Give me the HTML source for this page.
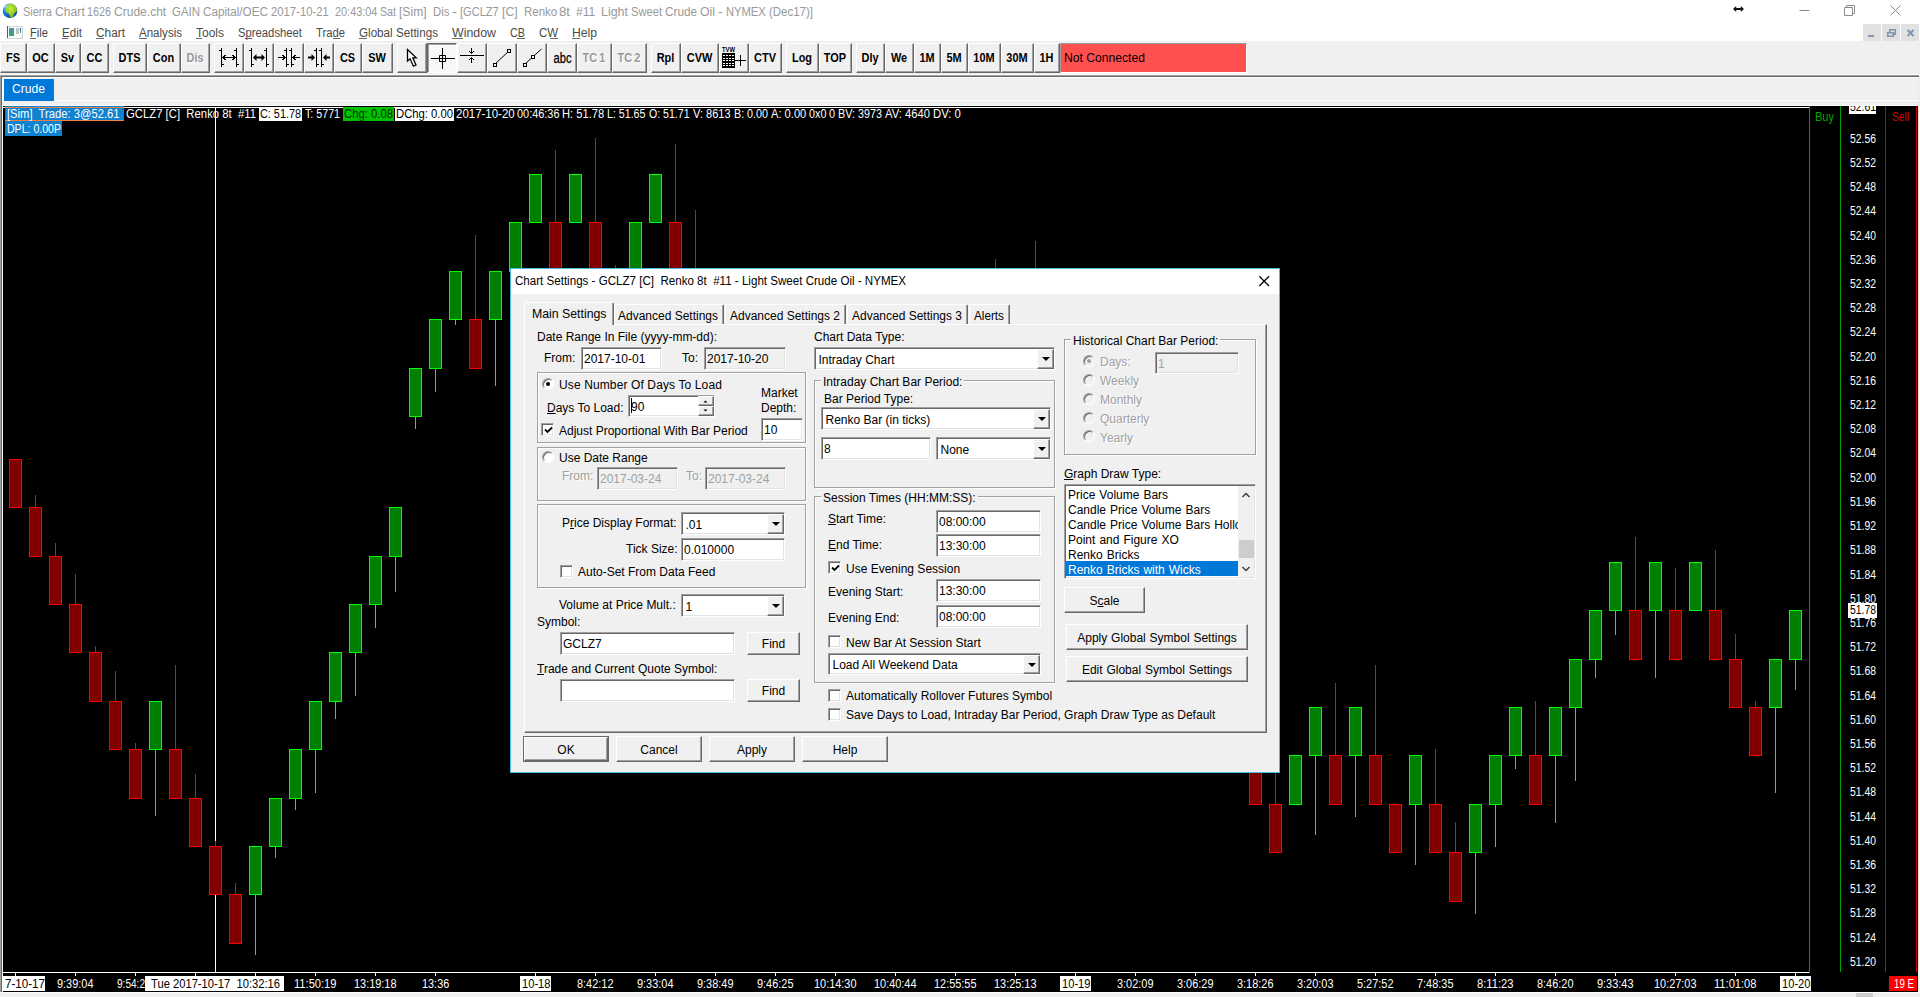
<!DOCTYPE html>
<html><head><meta charset="utf-8"><title>Sierra Chart</title>
<style>
html,body{margin:0;padding:0;}
body{width:1920px;height:997px;position:relative;overflow:hidden;background:#fff;font-family:"Liberation Sans",sans-serif;font-size:12px;color:#000;}
div,span{box-sizing:border-box;}
.a{position:absolute;}
/* toolbar buttons */
.tb{position:absolute;top:43px;height:30px;background:#f0f0f0;border:1px solid;border-color:#fff #696969 #696969 #fff;box-shadow:inset -1px -1px 0 #a0a0a0;}
.tb b{position:absolute;left:-1px;right:0;top:6px;text-align:center;font-size:13.5px;line-height:16px;font-weight:700;color:#000;transform:scaleX(.81);white-space:nowrap;}
.tb.dis b{color:#989898;text-shadow:1px 1px 0 #fff;word-spacing:-1px;}
.tb svg{position:absolute;left:0;top:0;}
/* candles */
.cr,.cg{position:absolute;width:13px;height:49px;border:1px solid;}
.cr{background:#800000;border-color:#f00;}
.cg{background:#008000;border-color:#0f0;}
.wr,.wg{position:absolute;width:1px;}
.wr{background:#f00;}
.wg{background:#0f0;}
/* dialog */
.btn{position:absolute;word-spacing:.5px;background:#f0f0f0;border:1px solid;border-color:#fff #696969 #696969 #fff;box-shadow:inset -1px -1px 0 #a0a0a0;text-align:center;font-size:12px;white-space:nowrap;}
.ed{position:absolute;background:#fff;border:1px solid;border-color:#a0a0a0 #fff #fff #a0a0a0;box-shadow:inset 1px 1px 0 #696969,inset -1px -1px 0 #e3e3e3;font-size:12px;white-space:nowrap;overflow:hidden;}
.ed.ro{background:#f0f0f0;}
.ed span{position:absolute;left:2px;top:3px;line-height:16px;}
.dd{position:absolute;right:0;top:1px;width:17px;bottom:0;background:#f0f0f0;border:1px solid;border-color:#fff #696969 #696969 #fff;box-shadow:inset -1px -1px 0 #a0a0a0;}
.dd i{position:absolute;left:4px;top:7px;width:0;height:0;border-left:4px solid transparent;border-right:4px solid transparent;border-top:4px solid #000;}
.gb{position:absolute;border:1px solid #a0a0a0;box-shadow:1px 1px 0 #fff,inset 1px 1px 0 #fff;}
.lb{position:absolute;font-size:12px;line-height:15px;white-space:nowrap;}
.lb.bg{background:#f0f0f0;padding:0 2px;}
.lb.dis{color:#a0a0a0;text-shadow:1px 1px 0 #fff;}
.cb{position:absolute;width:13px;height:13px;background:#fff;border:1px solid;border-color:#a0a0a0 #fff #fff #a0a0a0;box-shadow:inset 1px 1px 0 #696969,inset -1px -1px 0 #e3e3e3;}
.cb svg{position:absolute;left:2px;top:2px;}
.rd{position:absolute;width:12px;height:12px;border-radius:50%;background:#fff;border:1px solid;border-color:#a0a0a0 #fff #fff #a0a0a0;box-shadow:inset 1px 1px 0 #696969;transform:rotate(0deg);}
.rd.dis{background:#f0f0f0;}
.rd i{position:absolute;left:3px;top:3px;width:4px;height:4px;border-radius:50%;background:#000;}
.rd.dis i{background:#a0a0a0;}
u{text-decoration:underline;}

</style></head><body>
<div class="a" style="left:0;top:0;width:1920px;height:41px;background:#fff"></div><svg class="a" style="left:2px;top:3px" width="16" height="16" viewBox="0 0 16 16">
<defs><radialGradient id="gl" cx="30%" cy="28%" r="80%"><stop offset="0" stop-color="#7fd8ff"/><stop offset=".45" stop-color="#1f7fe0"/><stop offset="1" stop-color="#0a3a9a"/></radialGradient>
<radialGradient id="gg" cx="45%" cy="35%" r="75%"><stop offset="0" stop-color="#c6f03a"/><stop offset=".6" stop-color="#8fc81e"/><stop offset="1" stop-color="#4f9a1a"/></radialGradient>
<clipPath id="gc"><circle cx="8" cy="7.800" r="7.200"/></clipPath></defs>
<circle cx="8" cy="7.800" r="7.300" fill="url(#gl)"/>
<g clip-path="url(#gc)"><path d="M4.800 2.200C6.500 .800 10 .200 12.500 1.800c1.800 1.500 2.800 3.500 2.600 5.600-.500 1.300-1.700 1.600-2.600 2.600-.900 1.100-.600 2.800-1.400 4-.700 1-1.900 1.300-2.500.600C7.700 13.500 7.800 11.800 6.900 10.800 6 9.900 4.300 9.900 3.600 8.500 3 7.200 3.300 5.500 4 4.300z" fill="url(#gg)"/>
<path d="M3.200 3.500c1-.900 2.300-1.300 3.300-.800-.300.900-1.300 1.300-2 2-.600.500-1.300.700-1.800.300-.100-.500.100-1.100.500-1.500z" fill="#9adcf5" opacity=".75"/></g>
</svg><span style="position:absolute;left:22.9px;top:4.5px;height:15px;line-height:15px;font-size:12px;font-weight:400;color:#999;white-space:pre;transform-origin:0 50%;transform:scaleX(0.9027);">Sierra</span><span style="position:absolute;left:54.8px;top:4.5px;height:15px;line-height:15px;font-size:12px;font-weight:400;color:#999;white-space:pre;transform-origin:0 50%;transform:scaleX(1.0155);">Chart</span><span style="position:absolute;left:87.3px;top:4.5px;height:15px;line-height:15px;font-size:12px;font-weight:400;color:#999;white-space:pre;transform-origin:0 50%;transform:scaleX(0.8988);">1626</span><span style="position:absolute;left:113.9px;top:4.5px;height:15px;line-height:15px;font-size:12px;font-weight:400;color:#999;white-space:pre;transform-origin:0 50%;transform:scaleX(1.0032);">Crude.cht</span><span style="position:absolute;left:172.3px;top:4.5px;height:15px;line-height:15px;font-size:12px;font-weight:400;color:#999;white-space:pre;transform-origin:0 50%;transform:scaleX(0.9542);">GAIN</span><span style="position:absolute;left:202.9px;top:4.5px;height:15px;line-height:15px;font-size:12px;font-weight:400;color:#999;white-space:pre;transform-origin:0 50%;transform:scaleX(0.9730);">Capital/OEC</span><span style="position:absolute;left:270.8px;top:4.5px;height:15px;line-height:15px;font-size:12px;font-weight:400;color:#999;white-space:pre;transform-origin:0 50%;transform:scaleX(0.9415);">2017-10-21</span><span style="position:absolute;left:334.7px;top:4.5px;height:15px;line-height:15px;font-size:12px;font-weight:400;color:#999;white-space:pre;transform-origin:0 50%;transform:scaleX(0.9076);">20:43:04</span><span style="position:absolute;left:380.1px;top:4.5px;height:15px;line-height:15px;font-size:12px;font-weight:400;color:#999;white-space:pre;transform-origin:0 50%;transform:scaleX(0.8881);">Sat</span><span style="position:absolute;left:399.1px;top:4.5px;height:15px;line-height:15px;font-size:12px;font-weight:400;color:#999;white-space:pre;transform-origin:0 50%;transform:scaleX(1.0094);">[Sim]</span><span style="position:absolute;left:432.8px;top:4.5px;height:15px;line-height:15px;font-size:12px;font-weight:400;color:#999;white-space:pre;transform-origin:0 50%;transform:scaleX(0.9456);">Dis</span><span style="position:absolute;left:451.8px;top:4.5px;height:15px;line-height:15px;font-size:12px;font-weight:400;color:#999;white-space:pre;transform-origin:0 50%;transform:scaleX(1.2000);">-</span><span style="position:absolute;left:460.0px;top:4.5px;height:15px;line-height:15px;font-size:12px;font-weight:400;color:#999;white-space:pre;transform-origin:0 50%;transform:scaleX(0.9211);">[GCLZ7</span><span style="position:absolute;left:502.0px;top:4.5px;height:15px;line-height:15px;font-size:12px;font-weight:400;color:#999;white-space:pre;transform-origin:0 50%;transform:scaleX(1.0232);">[C]</span><span style="position:absolute;left:524.0px;top:4.5px;height:15px;line-height:15px;font-size:12px;font-weight:400;color:#999;white-space:pre;transform-origin:0 50%;transform:scaleX(0.9542);">Renko</span><span style="position:absolute;left:559.4px;top:4.5px;height:15px;line-height:15px;font-size:12px;font-weight:400;color:#999;white-space:pre;transform-origin:0 50%;transform:scaleX(1.0983);">8t</span><span style="position:absolute;left:575.6px;top:4.5px;height:15px;line-height:15px;font-size:12px;font-weight:400;color:#999;white-space:pre;transform-origin:0 50%;transform:scaleX(1.0031);">#11</span><span style="position:absolute;left:601.2px;top:4.5px;height:15px;line-height:15px;font-size:12px;font-weight:400;color:#999;white-space:pre;transform-origin:0 50%;transform:scaleX(1.0334);">Light</span><span style="position:absolute;left:631.1px;top:4.5px;height:15px;line-height:15px;font-size:12px;font-weight:400;color:#999;white-space:pre;transform-origin:0 50%;transform:scaleX(0.9353);">Sweet</span><span style="position:absolute;left:665.2px;top:4.5px;height:15px;line-height:15px;font-size:12px;font-weight:400;color:#999;white-space:pre;transform-origin:0 50%;transform:scaleX(0.9820);">Crude</span><span style="position:absolute;left:700.0px;top:4.5px;height:15px;line-height:15px;font-size:12px;font-weight:400;color:#999;white-space:pre;transform-origin:0 50%;transform:scaleX(1.0224);">Oil</span><span style="position:absolute;left:717.9px;top:4.5px;height:15px;line-height:15px;font-size:12px;font-weight:400;color:#999;white-space:pre;transform-origin:0 50%;transform:scaleX(1.1750);">-</span><span style="position:absolute;left:726.1px;top:4.5px;height:15px;line-height:15px;font-size:12px;font-weight:400;color:#999;white-space:pre;transform-origin:0 50%;transform:scaleX(0.9324);">NYMEX</span><span style="position:absolute;left:769.0px;top:4.5px;height:15px;line-height:15px;font-size:12px;font-weight:400;color:#999;white-space:pre;transform-origin:0 50%;transform:scaleX(0.9562);">(Dec17)]</span><svg class="a" style="left:1725px;top:0" width="195" height="23" viewBox="0 0 195 23" fill="none" stroke="#8a8a8a" stroke-width="1">
<path d="M74.500 10.500h10"/>
<path d="M119.500 7.500h8v8h-8zM121.500 7.500v-2h8v8h-2"/>
<path d="M165.500 5.500l10 10M175.500 5.500l-10 10"/>
<g stroke="none" fill="#111"><path d="M8 9l3.200-3v2h4.600v-2L19 9l-3.200 3v-2h-4.600v2z"/></g>
</svg><svg class="a" style="left:7px;top:26px" width="16" height="13" viewBox="0 0 16 13">
<rect x=".5" y=".5" width="15" height="12" fill="#fafafa" stroke="#d0d4da"/><rect x="0" y="0" width="1" height="12" fill="#5a5a60"/>
<defs><linearGradient id="mg" x1="0" y1="0" x2="0" y2="1"><stop offset="0" stop-color="#6a7ec0"/><stop offset=".3" stop-color="#3f9aa0"/><stop offset="1" stop-color="#3aa858"/></linearGradient></defs>
<rect x="2" y="2" width="5" height="8" fill="url(#mg)"/><rect x="9" y="2" width="3" height="6" fill="#c4c4c4"/><rect x="13" y="2" width="1" height="3" fill="#2a5fb0"/><rect x="13" y="5" width="1" height="2" fill="#3aa858"/>
</svg><span style="position:absolute;left:30px;top:25.8px;height:15px;line-height:15px;font-size:12px;font-weight:400;color:#4a4a4a;white-space:pre;transform-origin:0 50%;transform:scaleX(0.9305);">File</span><span style="position:absolute;left:62px;top:25.8px;height:15px;line-height:15px;font-size:12px;font-weight:400;color:#4a4a4a;white-space:pre;transform-origin:0 50%;transform:scaleX(0.9668);">Edit</span><span style="position:absolute;left:96px;top:25.8px;height:15px;line-height:15px;font-size:12px;font-weight:400;color:#4a4a4a;white-space:pre;transform-origin:0 50%;transform:scaleX(0.9883);">Chart</span><span style="position:absolute;left:139px;top:25.8px;height:15px;line-height:15px;font-size:12px;font-weight:400;color:#4a4a4a;white-space:pre;transform-origin:0 50%;transform:scaleX(0.9622);">Analysis</span><span style="position:absolute;left:196px;top:25.8px;height:15px;line-height:15px;font-size:12px;font-weight:400;color:#4a4a4a;white-space:pre;transform-origin:0 50%;transform:scaleX(0.9994);">Tools</span><span style="position:absolute;left:238px;top:25.8px;height:15px;line-height:15px;font-size:12px;font-weight:400;color:#4a4a4a;white-space:pre;transform-origin:0 50%;transform:scaleX(0.9403);">Spreadsheet</span><span style="position:absolute;left:316px;top:25.8px;height:15px;line-height:15px;font-size:12px;font-weight:400;color:#4a4a4a;white-space:pre;transform-origin:0 50%;transform:scaleX(0.9383);">Trade</span><span style="position:absolute;left:359px;top:25.8px;height:15px;line-height:15px;font-size:12px;font-weight:400;color:#4a4a4a;white-space:pre;transform-origin:0 50%;transform:scaleX(0.9706);">Global Settings</span><span style="position:absolute;left:452px;top:25.8px;height:15px;line-height:15px;font-size:12px;font-weight:400;color:#4a4a4a;white-space:pre;transform-origin:0 50%;transform:scaleX(1.0307);">Window</span><span style="position:absolute;left:510px;top:25.8px;height:15px;line-height:15px;font-size:12px;font-weight:400;color:#4a4a4a;white-space:pre;transform-origin:0 50%;transform:scaleX(0.8997);">CB</span><span style="position:absolute;left:539px;top:25.8px;height:15px;line-height:15px;font-size:12px;font-weight:400;color:#4a4a4a;white-space:pre;transform-origin:0 50%;transform:scaleX(0.9500);">CW</span><span style="position:absolute;left:572px;top:25.8px;height:15px;line-height:15px;font-size:12px;font-weight:400;color:#4a4a4a;white-space:pre;transform-origin:0 50%;transform:scaleX(1.0127);">Help</span><div class="a" style="left:30px;top:38px;width:6px;height:1px;background:#6a6a6a"></div><div class="a" style="left:62px;top:38px;width:6px;height:1px;background:#6a6a6a"></div><div class="a" style="left:96px;top:38px;width:8px;height:1px;background:#6a6a6a"></div><div class="a" style="left:139px;top:38px;width:8px;height:1px;background:#6a6a6a"></div><div class="a" style="left:196px;top:38px;width:6px;height:1px;background:#6a6a6a"></div><div class="a" style="left:244.5px;top:38px;width:7px;height:1px;background:#6a6a6a"></div><div class="a" style="left:333px;top:38px;width:7px;height:1px;background:#6a6a6a"></div><div class="a" style="left:359px;top:38px;width:8px;height:1px;background:#6a6a6a"></div><div class="a" style="left:452px;top:38px;width:11px;height:1px;background:#6a6a6a"></div><div class="a" style="left:517px;top:38px;width:8px;height:1px;background:#6a6a6a"></div><div class="a" style="left:550px;top:38px;width:8px;height:1px;background:#6a6a6a"></div><div class="a" style="left:572px;top:38px;width:8px;height:1px;background:#6a6a6a"></div><div class="a" style="left:1863px;top:24px;width:18px;height:18px;background:#e1e1e1"></div><div class="a" style="left:1882px;top:24px;width:18px;height:18px;background:#e1e1e1"></div><div class="a" style="left:1901px;top:24px;width:18px;height:18px;background:#e1e1e1"></div><svg class="a" style="left:1863px;top:24px" width="56" height="18" viewBox="0 0 56 18">
<rect x="5" y="11" width="6" height="2" fill="#7f94ad"/>
<g fill="none" stroke="#7f94ad" stroke-width="1.500"><path d="M26.750 8V5.750h5.500v4.500H30"/><rect x="24.750" y="8.750" width="5.500" height="3.500"/></g>
<path d="M44.500 6l6 6M50.500 6l-6 6" stroke="#7f94ad" stroke-width="2" fill="none"/>
</svg><div class="a" style="left:0;top:41px;width:1920px;height:65px;background:#f0f0f0"></div><div class="a" style="left:0;top:74px;width:1920px;height:1px;background:#fbfbfb"></div><div class="a" style="left:0;top:75px;width:1919px;height:1px;background:#a0a0a0"></div><div class="a" style="left:0;top:76px;width:1919px;height:1px;background:#696969"></div><div class="a" style="left:0;top:76px;width:1px;height:921px;background:#a0a0a0"></div><div class="a" style="left:1px;top:76px;width:1px;height:916px;background:#696969"></div><div class="a" style="left:2px;top:77px;width:1916px;height:1px;background:#fff"></div><div class="a" style="left:2px;top:77px;width:2px;height:25px;background:#fff"></div><div class="a" style="left:1918px;top:77px;width:1px;height:915px;background:#e8e8e8"></div><div class="a" style="left:54px;top:100px;width:1864px;height:1px;background:#fff"></div><div class="a" style="left:2px;top:105px;width:1916px;height:1px;background:#fcfcfc"></div><div class="a" style="left:4px;top:79px;width:49px;height:22px;background:#0078d7"></div><div class="a" style="left:53px;top:79px;width:1px;height:22px;background:#696969"></div><span style="position:absolute;left:12px;top:81.0px;height:16px;line-height:16px;font-size:13px;font-weight:400;color:#fff;white-space:pre;transform-origin:0 50%;transform:scaleX(0.9316);">Crude</span><div class="tb" style="left:0px;width:27px"><b>FS</b></div><div class="tb" style="left:27px;width:28px"><b>OC</b></div><div class="tb" style="left:55px;width:26px"><b>Sv</b></div><div class="tb" style="left:81px;width:28px"><b>CC</b></div><div class="tb" style="left:113px;width:34px"><b>DTS</b></div><div class="tb" style="left:147px;width:34px"><b>Con</b></div><div class="tb dis" style="left:181px;width:29px"><b>Dis</b></div><div class="tb" style="left:214px;width:30px"><svg width="30" height="30" viewBox="0 0 30 30" style="left:-1px;top:-1px"><g shape-rendering="crispEdges" stroke="#000" fill="none" stroke-width="1"><path d="M7.500 5v19M22.500 5v19M5 7.500h2M20 7.500h2M8 21.500h2M23 21.500h2M9 14.500h12M11.500 12l-2.500 2.500 2.500 2.500M18.500 12l2.500 2.500-2.500 2.500"/></g></svg></div><div class="tb" style="left:244px;width:30px"><svg width="30" height="30" viewBox="0 0 30 30" style="left:-1px;top:-1px"><g stroke="#000" fill="none" stroke-width="1"><path d="M7.500 5v19M22.500 5v19M5 7.500h2M20 7.500h2M8 21.500h2M23 21.500h2"/><path d="M11 14.500h8" stroke-width="2"/></g><path d="M9 14.500l3.500-3.500v7zM21 14.500l-3.500-3.500v7z" fill="#000"/></svg></div><div class="tb" style="left:274px;width:30px"><svg width="30" height="30" viewBox="0 0 30 30" style="left:-1px;top:-1px"><g shape-rendering="crispEdges" stroke="#000" fill="none" stroke-width="1"><path d="M12.500 5v19M17.500 5v19M10 7.500h2M15 7.500h2M13 21.500h2M18 21.500h2M4 14.500h7M8.500 12l2.500 2.500-2.500 2.500M19 14.500h7M21.500 12l-2.500 2.500 2.500 2.500"/></g></svg></div><div class="tb" style="left:304px;width:30px"><svg width="30" height="30" viewBox="0 0 30 30" style="left:-1px;top:-1px"><g stroke="#000" fill="none" stroke-width="1"><path d="M12.500 5v19M17.500 5v19M10 7.500h2M15 7.500h2M13 21.500h2M18 21.500h2"/><path d="M4 14.500h4M22 14.500h4" stroke-width="2"/></g><path d="M11 14.500l-3.500-3.500v7zM19 14.500l3.500-3.500v7z" fill="#000"/></svg></div><div class="tb" style="left:334px;width:28px"><b>CS</b></div><div class="tb" style="left:362px;width:31px"><b>SW</b></div><div class="tb" style="left:397px;width:30px"><svg width="30" height="30" viewBox="0 0 30 30" style="left:-1px;top:-1px"><path d="M10.500 6.500V18l2.600-2.200 3.300 7.400 2.600-1.200-3.200-7.200h3.400z" fill="#fff" stroke="#000" stroke-width="1.300"/></svg></div><div class="tb" style="left:427px;width:30px;border-color:#696969 #fff #fff #696969;box-shadow:inset 1px 1px 0 #a0a0a0;background:#f8f8f8"><svg width="30" height="30" viewBox="0 0 30 30" style="left:-1px;top:-1px"><g stroke="#000" fill="none" stroke-width="1"><path d="M4 15.500h24M15.500 5v21M12.500 12.500h6v6h-6z"/></g></svg></div><div class="tb" style="left:457px;width:30px"><svg width="30" height="30" viewBox="0 0 30 30" style="left:-1px;top:-1px"><g stroke="#000" fill="none" stroke-width="1"><path d="M3 12.500h24M14.500 5v5M12 8l2.500 2.500L17 8M14.500 20v-5M12 17l2.500-2.500L17 17"/></g></svg></div><div class="tb" style="left:487px;width:30px"><svg width="30" height="30" viewBox="0 0 30 30" style="left:-1px;top:-1px"><g stroke="#000" fill="#f0f0f0" stroke-width="1"><path d="M8 21L22 8"/><rect x="6.500" y="20.500" width="3" height="3"/><rect x="20.500" y="6.500" width="3" height="3"/></g></svg></div><div class="tb" style="left:517px;width:30px"><svg width="30" height="30" viewBox="0 0 30 30" style="left:-1px;top:-1px"><g stroke="#000" fill="#f0f0f0" stroke-width="1"><path d="M8 21L24.500 6"/><rect x="6.500" y="20.500" width="3" height="3"/><rect x="14.500" y="12.500" width="3" height="3"/></g></svg></div><div class="tb" style="left:547px;width:30px"><svg width="30" height="30" viewBox="0 0 30 30" style="left:-1px;top:-1px"><text x="15.500" y="19.500" font-family="Liberation Sans" font-size="14" text-anchor="middle" fill="#000" stroke="#000" stroke-width=".25" textLength="18" lengthAdjust="spacingAndGlyphs">abc</text></svg></div><div class="tb dis" style="left:577px;width:35px"><b>TC 1</b></div><div class="tb dis" style="left:612px;width:35px"><b>TC 2</b></div><div class="tb" style="left:651px;width:30px"><b>Rpl</b></div><div class="tb" style="left:681px;width:38px"><b>CVW</b></div><div class="tb" style="left:719px;width:30px"><svg width="30" height="30" viewBox="0 0 30 30" style="left:-1px;top:-1px"><rect x="3" y="10" width="13" height="15" fill="#000"/><g fill="#fff"><rect x="4" y="12" width="2" height="1"/><rect x="4" y="15" width="2" height="1"/><rect x="4" y="17" width="2" height="1"/><rect x="4" y="20" width="2" height="1"/><rect x="4" y="22" width="2" height="1"/><rect x="7" y="12" width="2" height="1"/><rect x="7" y="15" width="2" height="1"/><rect x="7" y="17" width="2" height="1"/><rect x="7" y="20" width="2" height="1"/><rect x="7" y="22" width="2" height="1"/><rect x="10" y="12" width="2" height="1"/><rect x="10" y="15" width="2" height="1"/><rect x="10" y="17" width="2" height="1"/><rect x="10" y="20" width="2" height="1"/><rect x="10" y="22" width="2" height="1"/><rect x="13" y="12" width="2" height="1"/><rect x="13" y="15" width="2" height="1"/><rect x="13" y="17" width="2" height="1"/><rect x="13" y="20" width="2" height="1"/><rect x="13" y="22" width="2" height="1"/></g><g stroke="#000" stroke-width="1" fill="none"><path d="M16 17.500h11M21.500 12v11"/></g><text x="3" y="9" font-family="Liberation Sans" font-size="7" font-weight="700" fill="#000" textLength="13" lengthAdjust="spacingAndGlyphs">TVW</text></svg></div><div class="tb" style="left:749px;width:33px"><b>CTV</b></div><div class="tb" style="left:786px;width:33px"><b>Log</b></div><div class="tb" style="left:819px;width:33px"><b>TOP</b></div><div class="tb" style="left:856px;width:29px"><b>Dly</b></div><div class="tb" style="left:885px;width:29px"><b>We</b></div><div class="tb" style="left:914px;width:27px"><b>1M</b></div><div class="tb" style="left:941px;width:27px"><b>5M</b></div><div class="tb" style="left:968px;width:33px"><b>10M</b></div><div class="tb" style="left:1001px;width:33px"><b>30M</b></div><div class="tb" style="left:1034px;width:26px"><b>1H</b></div><div class="a" style="left:1060px;top:43px;width:187px;height:30px;background:#ff5050;border:1px solid;border-color:#a0a0a0 #fff #fff #a0a0a0"></div><span style="position:absolute;left:1064px;top:50.8px;height:15px;line-height:15px;font-size:12px;font-weight:400;color:#000;white-space:pre;transform-origin:0 50%;transform:scaleX(1.0117);">Not Connected</span><div class="a" style="left:3px;top:106px;width:1915px;height:886px;background:#000"></div><div class="a" style="left:0;top:992px;width:1920px;height:5px;background:#f0f0f0"></div><div class="a" style="left:2px;top:992px;width:1917px;height:1px;background:#fff"></div><div class="a" style="left:1856px;top:993px;width:17px;height:4px;background:#cdcdcd"></div><div class="a" style="left:3px;top:107px;width:1806px;height:1px;background:#fff"></div><div class="a" style="left:3px;top:972px;width:1807px;height:1px;background:#fff"></div><div class="a" style="left:1809px;top:106px;width:1px;height:867px;background:#00a000"></div><div class="a" style="left:1840px;top:106px;width:1px;height:866px;background:#00a000"></div><div class="a" style="left:1885px;top:106px;width:1px;height:866px;background:#d00000"></div><div class="a" style="left:1916px;top:106px;width:1px;height:866px;background:#d00000"></div><div class="a" style="left:215px;top:107px;width:1px;height:866px;background:#fff"></div><div class="a" style="left:5px;top:106px;width:119px;height:15px;background:#0f82d2;border-top:1px solid #0f82d2"></div><div class="a" style="left:5px;top:107px;width:119px;height:1px;background:#f08040"></div><div class="a" style="left:5px;top:120px;width:119px;height:1px;background:#f08040"></div><span style="position:absolute;left:6.5px;top:106.5px;height:15px;line-height:15px;font-size:12px;font-weight:400;color:#fff;white-space:pre;transform-origin:0 50%;transform:scaleX(0.9356);">[Sim]  Trade: 3@52.61</span><div class="a" style="left:5px;top:121px;width:57px;height:15px;background:#0f82d2"></div><span style="position:absolute;left:6.5px;top:121.5px;height:15px;line-height:15px;font-size:12px;font-weight:400;color:#fff;white-space:pre;transform-origin:0 50%;transform:scaleX(0.8798);">DPL: 0.00P</span><span style="position:absolute;left:126px;top:106.5px;height:15px;line-height:15px;font-size:12px;font-weight:400;color:#fff;white-space:pre;transform-origin:0 50%;transform:scaleX(0.9431);">GCLZ7 [C]  Renko 8t  #11</span><div class="a" style="left:259px;top:107px;width:43px;height:14px;background:#fff"></div><span style="position:absolute;left:260px;top:106.5px;height:15px;line-height:15px;font-size:12px;font-weight:400;color:#000;white-space:pre;transform-origin:0 50%;transform:scaleX(0.9036);">C: 51.78</span><span style="position:absolute;left:305px;top:106.5px;height:15px;line-height:15px;font-size:12px;font-weight:400;color:#fff;white-space:pre;transform-origin:0 50%;transform:scaleX(0.8889);">T: 5771</span><div class="a" style="left:343px;top:107px;width:51px;height:14px;background:#00c000"></div><span style="position:absolute;left:344px;top:106.5px;height:15px;line-height:15px;font-size:12px;font-weight:400;color:#003000;white-space:pre;transform-origin:0 50%;transform:scaleX(0.9415);">Chg: 0.08</span><div class="a" style="left:395px;top:107px;width:59px;height:14px;background:#fff"></div><span style="position:absolute;left:396px;top:106.5px;height:15px;line-height:15px;font-size:12px;font-weight:400;color:#000;white-space:pre;transform-origin:0 50%;transform:scaleX(0.9390);">DChg: 0.00</span><span style="position:absolute;left:455.5px;top:106.5px;height:15px;line-height:15px;font-size:12px;font-weight:400;color:#fff;white-space:pre;transform-origin:0 50%;transform:scaleX(0.9562);">2017-10-20</span><span style="position:absolute;left:517.1px;top:106.5px;height:15px;line-height:15px;font-size:12px;font-weight:400;color:#fff;white-space:pre;transform-origin:0 50%;transform:scaleX(0.9097);">00:46:36</span><span style="position:absolute;left:562.1px;top:106.5px;height:15px;line-height:15px;font-size:12px;font-weight:400;color:#fff;white-space:pre;transform-origin:0 50%;transform:scaleX(0.9300);">H: 51.78</span><span style="position:absolute;left:607.2px;top:106.5px;height:15px;line-height:15px;font-size:12px;font-weight:400;color:#fff;white-space:pre;transform-origin:0 50%;transform:scaleX(0.8853);">L: 51.65</span><span style="position:absolute;left:649.1px;top:106.5px;height:15px;line-height:15px;font-size:12px;font-weight:400;color:#fff;white-space:pre;transform-origin:0 50%;transform:scaleX(0.8798);">O: 51.71</span><span style="position:absolute;left:693.1px;top:106.5px;height:15px;line-height:15px;font-size:12px;font-weight:400;color:#fff;white-space:pre;transform-origin:0 50%;transform:scaleX(0.9188);">V: 8613</span><span style="position:absolute;left:734.2px;top:106.5px;height:15px;line-height:15px;font-size:12px;font-weight:400;color:#fff;white-space:pre;transform-origin:0 50%;transform:scaleX(0.8940);">B: 0.00</span><span style="position:absolute;left:770.9px;top:106.5px;height:15px;line-height:15px;font-size:12px;font-weight:400;color:#fff;white-space:pre;transform-origin:0 50%;transform:scaleX(0.9282);">A: 0.00</span><span style="position:absolute;left:809.1px;top:106.5px;height:15px;line-height:15px;font-size:12px;font-weight:400;color:#fff;white-space:pre;transform-origin:0 50%;transform:scaleX(0.8988);">0x0</span><span style="position:absolute;left:829.1px;top:106.5px;height:15px;line-height:15px;font-size:12px;font-weight:400;color:#fff;white-space:pre;transform-origin:0 50%;transform:scaleX(0.9121);">0</span><span style="position:absolute;left:838.1px;top:106.5px;height:15px;line-height:15px;font-size:12px;font-weight:400;color:#fff;white-space:pre;transform-origin:0 50%;transform:scaleX(0.8991);">BV: 3973</span><span style="position:absolute;left:884.6px;top:106.5px;height:15px;line-height:15px;font-size:12px;font-weight:400;color:#fff;white-space:pre;transform-origin:0 50%;transform:scaleX(0.9387);">AV: 4640</span><span style="position:absolute;left:932.9px;top:106.5px;height:15px;line-height:15px;font-size:12px;font-weight:400;color:#fff;white-space:pre;transform-origin:0 50%;transform:scaleX(0.9433);">DV: 0</span><span style="position:absolute;left:1815px;top:109.5px;height:15px;line-height:15px;font-size:12px;font-weight:400;color:#00a800;white-space:pre;transform-origin:0 50%;transform:scaleX(0.9184);">Buy</span><span style="position:absolute;left:1892px;top:109.5px;height:15px;line-height:15px;font-size:12px;font-weight:400;color:#d80000;white-space:pre;transform-origin:0 50%;transform:scaleX(0.8493);">Sell</span><span style="position:absolute;left:1850px;top:132.0px;height:15px;line-height:15px;font-size:12px;font-weight:400;color:#fff;white-space:pre;transform-origin:0 50%;transform:scaleX(0.8658);">52.56</span><span style="position:absolute;left:1850px;top:156.0px;height:15px;line-height:15px;font-size:12px;font-weight:400;color:#fff;white-space:pre;transform-origin:0 50%;transform:scaleX(0.8658);">52.52</span><span style="position:absolute;left:1850px;top:180.0px;height:15px;line-height:15px;font-size:12px;font-weight:400;color:#fff;white-space:pre;transform-origin:0 50%;transform:scaleX(0.8658);">52.48</span><span style="position:absolute;left:1850px;top:204.0px;height:15px;line-height:15px;font-size:12px;font-weight:400;color:#fff;white-space:pre;transform-origin:0 50%;transform:scaleX(0.8658);">52.44</span><span style="position:absolute;left:1850px;top:229.0px;height:15px;line-height:15px;font-size:12px;font-weight:400;color:#fff;white-space:pre;transform-origin:0 50%;transform:scaleX(0.8658);">52.40</span><span style="position:absolute;left:1850px;top:253.0px;height:15px;line-height:15px;font-size:12px;font-weight:400;color:#fff;white-space:pre;transform-origin:0 50%;transform:scaleX(0.8658);">52.36</span><span style="position:absolute;left:1850px;top:277.0px;height:15px;line-height:15px;font-size:12px;font-weight:400;color:#fff;white-space:pre;transform-origin:0 50%;transform:scaleX(0.8658);">52.32</span><span style="position:absolute;left:1850px;top:301.0px;height:15px;line-height:15px;font-size:12px;font-weight:400;color:#fff;white-space:pre;transform-origin:0 50%;transform:scaleX(0.8658);">52.28</span><span style="position:absolute;left:1850px;top:325.0px;height:15px;line-height:15px;font-size:12px;font-weight:400;color:#fff;white-space:pre;transform-origin:0 50%;transform:scaleX(0.8658);">52.24</span><span style="position:absolute;left:1850px;top:350.0px;height:15px;line-height:15px;font-size:12px;font-weight:400;color:#fff;white-space:pre;transform-origin:0 50%;transform:scaleX(0.8658);">52.20</span><span style="position:absolute;left:1850px;top:374.0px;height:15px;line-height:15px;font-size:12px;font-weight:400;color:#fff;white-space:pre;transform-origin:0 50%;transform:scaleX(0.8658);">52.16</span><span style="position:absolute;left:1850px;top:398.0px;height:15px;line-height:15px;font-size:12px;font-weight:400;color:#fff;white-space:pre;transform-origin:0 50%;transform:scaleX(0.8658);">52.12</span><span style="position:absolute;left:1850px;top:422.0px;height:15px;line-height:15px;font-size:12px;font-weight:400;color:#fff;white-space:pre;transform-origin:0 50%;transform:scaleX(0.8658);">52.08</span><span style="position:absolute;left:1850px;top:446.0px;height:15px;line-height:15px;font-size:12px;font-weight:400;color:#fff;white-space:pre;transform-origin:0 50%;transform:scaleX(0.8658);">52.04</span><span style="position:absolute;left:1850px;top:471.0px;height:15px;line-height:15px;font-size:12px;font-weight:400;color:#fff;white-space:pre;transform-origin:0 50%;transform:scaleX(0.8658);">52.00</span><span style="position:absolute;left:1850px;top:495.0px;height:15px;line-height:15px;font-size:12px;font-weight:400;color:#fff;white-space:pre;transform-origin:0 50%;transform:scaleX(0.8658);">51.96</span><span style="position:absolute;left:1850px;top:519.0px;height:15px;line-height:15px;font-size:12px;font-weight:400;color:#fff;white-space:pre;transform-origin:0 50%;transform:scaleX(0.8658);">51.92</span><span style="position:absolute;left:1850px;top:543.0px;height:15px;line-height:15px;font-size:12px;font-weight:400;color:#fff;white-space:pre;transform-origin:0 50%;transform:scaleX(0.8658);">51.88</span><span style="position:absolute;left:1850px;top:568.0px;height:15px;line-height:15px;font-size:12px;font-weight:400;color:#fff;white-space:pre;transform-origin:0 50%;transform:scaleX(0.8658);">51.84</span><span style="position:absolute;left:1850px;top:592.0px;height:15px;line-height:15px;font-size:12px;font-weight:400;color:#fff;white-space:pre;transform-origin:0 50%;transform:scaleX(0.8658);">51.80</span><span style="position:absolute;left:1850px;top:616.0px;height:15px;line-height:15px;font-size:12px;font-weight:400;color:#fff;white-space:pre;transform-origin:0 50%;transform:scaleX(0.8658);">51.76</span><span style="position:absolute;left:1850px;top:640.0px;height:15px;line-height:15px;font-size:12px;font-weight:400;color:#fff;white-space:pre;transform-origin:0 50%;transform:scaleX(0.8658);">51.72</span><span style="position:absolute;left:1850px;top:664.0px;height:15px;line-height:15px;font-size:12px;font-weight:400;color:#fff;white-space:pre;transform-origin:0 50%;transform:scaleX(0.8658);">51.68</span><span style="position:absolute;left:1850px;top:689.0px;height:15px;line-height:15px;font-size:12px;font-weight:400;color:#fff;white-space:pre;transform-origin:0 50%;transform:scaleX(0.8658);">51.64</span><span style="position:absolute;left:1850px;top:713.0px;height:15px;line-height:15px;font-size:12px;font-weight:400;color:#fff;white-space:pre;transform-origin:0 50%;transform:scaleX(0.8658);">51.60</span><span style="position:absolute;left:1850px;top:737.0px;height:15px;line-height:15px;font-size:12px;font-weight:400;color:#fff;white-space:pre;transform-origin:0 50%;transform:scaleX(0.8658);">51.56</span><span style="position:absolute;left:1850px;top:761.0px;height:15px;line-height:15px;font-size:12px;font-weight:400;color:#fff;white-space:pre;transform-origin:0 50%;transform:scaleX(0.8658);">51.52</span><span style="position:absolute;left:1850px;top:785.0px;height:15px;line-height:15px;font-size:12px;font-weight:400;color:#fff;white-space:pre;transform-origin:0 50%;transform:scaleX(0.8658);">51.48</span><span style="position:absolute;left:1850px;top:810.0px;height:15px;line-height:15px;font-size:12px;font-weight:400;color:#fff;white-space:pre;transform-origin:0 50%;transform:scaleX(0.8658);">51.44</span><span style="position:absolute;left:1850px;top:834.0px;height:15px;line-height:15px;font-size:12px;font-weight:400;color:#fff;white-space:pre;transform-origin:0 50%;transform:scaleX(0.8658);">51.40</span><span style="position:absolute;left:1850px;top:858.0px;height:15px;line-height:15px;font-size:12px;font-weight:400;color:#fff;white-space:pre;transform-origin:0 50%;transform:scaleX(0.8658);">51.36</span><span style="position:absolute;left:1850px;top:882.0px;height:15px;line-height:15px;font-size:12px;font-weight:400;color:#fff;white-space:pre;transform-origin:0 50%;transform:scaleX(0.8658);">51.32</span><span style="position:absolute;left:1850px;top:906.0px;height:15px;line-height:15px;font-size:12px;font-weight:400;color:#fff;white-space:pre;transform-origin:0 50%;transform:scaleX(0.8658);">51.28</span><span style="position:absolute;left:1850px;top:931.0px;height:15px;line-height:15px;font-size:12px;font-weight:400;color:#fff;white-space:pre;transform-origin:0 50%;transform:scaleX(0.8658);">51.24</span><span style="position:absolute;left:1850px;top:955.0px;height:15px;line-height:15px;font-size:12px;font-weight:400;color:#fff;white-space:pre;transform-origin:0 50%;transform:scaleX(0.8658);">51.20</span><div class="a" style="left:1849px;top:106px;width:27px;height:8px;background:#fff;overflow:hidden"><span style="position:absolute;left:1px;top:-6px;font-size:12px;line-height:15px;color:#000;transform-origin:0 50%;transform:scaleX(.87);white-space:pre">52.61</span></div><div class="a" style="left:1848px;top:603px;width:29px;height:15px;background:#fff"></div><span style="position:absolute;left:1850px;top:603.0px;height:15px;line-height:15px;font-size:12px;font-weight:400;color:#000;white-space:pre;transform-origin:0 50%;transform:scaleX(0.8658);">51.78</span><div class="a" style="left:15px;top:973px;width:1px;height:3px;background:#fff"></div><div class="a" style="left:75px;top:973px;width:1px;height:3px;background:#fff"></div><span style="position:absolute;left:57.2px;top:977.0px;height:15px;line-height:15px;font-size:12px;font-weight:400;color:#fff;white-space:pre;transform-origin:0 50%;transform:scaleX(0.9114);">9:39:04</span><div class="a" style="left:135px;top:973px;width:1px;height:3px;background:#fff"></div><div class="a" style="left:195px;top:973px;width:1px;height:3px;background:#fff"></div><div class="a" style="left:255px;top:973px;width:1px;height:3px;background:#fff"></div><div class="a" style="left:315px;top:973px;width:1px;height:3px;background:#fff"></div><span style="position:absolute;left:294.2px;top:977.0px;height:15px;line-height:15px;font-size:12px;font-weight:400;color:#fff;white-space:pre;transform-origin:0 50%;transform:scaleX(0.9274);">11:50:19</span><div class="a" style="left:375px;top:973px;width:1px;height:3px;background:#fff"></div><span style="position:absolute;left:354.2px;top:977.0px;height:15px;line-height:15px;font-size:12px;font-weight:400;color:#fff;white-space:pre;transform-origin:0 50%;transform:scaleX(0.9097);">13:19:18</span><div class="a" style="left:435px;top:973px;width:1px;height:3px;background:#fff"></div><span style="position:absolute;left:421.9px;top:977.0px;height:15px;line-height:15px;font-size:12px;font-weight:400;color:#fff;white-space:pre;transform-origin:0 50%;transform:scaleX(0.9074);">13:36</span><div class="a" style="left:535px;top:973px;width:1px;height:3px;background:#fff"></div><div class="a" style="left:595px;top:973px;width:1px;height:3px;background:#fff"></div><span style="position:absolute;left:577.2px;top:977.0px;height:15px;line-height:15px;font-size:12px;font-weight:400;color:#fff;white-space:pre;transform-origin:0 50%;transform:scaleX(0.9114);">8:42:12</span><div class="a" style="left:655px;top:973px;width:1px;height:3px;background:#fff"></div><span style="position:absolute;left:637.2px;top:977.0px;height:15px;line-height:15px;font-size:12px;font-weight:400;color:#fff;white-space:pre;transform-origin:0 50%;transform:scaleX(0.9114);">9:33:04</span><div class="a" style="left:715px;top:973px;width:1px;height:3px;background:#fff"></div><span style="position:absolute;left:697.2px;top:977.0px;height:15px;line-height:15px;font-size:12px;font-weight:400;color:#fff;white-space:pre;transform-origin:0 50%;transform:scaleX(0.9114);">9:38:49</span><div class="a" style="left:775px;top:973px;width:1px;height:3px;background:#fff"></div><span style="position:absolute;left:757.2px;top:977.0px;height:15px;line-height:15px;font-size:12px;font-weight:400;color:#fff;white-space:pre;transform-origin:0 50%;transform:scaleX(0.9114);">9:46:25</span><div class="a" style="left:835px;top:973px;width:1px;height:3px;background:#fff"></div><span style="position:absolute;left:814.2px;top:977.0px;height:15px;line-height:15px;font-size:12px;font-weight:400;color:#fff;white-space:pre;transform-origin:0 50%;transform:scaleX(0.9097);">10:14:30</span><div class="a" style="left:895px;top:973px;width:1px;height:3px;background:#fff"></div><span style="position:absolute;left:874.2px;top:977.0px;height:15px;line-height:15px;font-size:12px;font-weight:400;color:#fff;white-space:pre;transform-origin:0 50%;transform:scaleX(0.9097);">10:40:44</span><div class="a" style="left:955px;top:973px;width:1px;height:3px;background:#fff"></div><span style="position:absolute;left:934.2px;top:977.0px;height:15px;line-height:15px;font-size:12px;font-weight:400;color:#fff;white-space:pre;transform-origin:0 50%;transform:scaleX(0.9097);">12:55:55</span><div class="a" style="left:1015px;top:973px;width:1px;height:3px;background:#fff"></div><span style="position:absolute;left:994.2px;top:977.0px;height:15px;line-height:15px;font-size:12px;font-weight:400;color:#fff;white-space:pre;transform-origin:0 50%;transform:scaleX(0.9097);">13:25:13</span><div class="a" style="left:1075px;top:973px;width:1px;height:3px;background:#fff"></div><div class="a" style="left:1135px;top:973px;width:1px;height:3px;background:#fff"></div><span style="position:absolute;left:1117.2px;top:977.0px;height:15px;line-height:15px;font-size:12px;font-weight:400;color:#fff;white-space:pre;transform-origin:0 50%;transform:scaleX(0.9114);">3:02:09</span><div class="a" style="left:1195px;top:973px;width:1px;height:3px;background:#fff"></div><span style="position:absolute;left:1177.2px;top:977.0px;height:15px;line-height:15px;font-size:12px;font-weight:400;color:#fff;white-space:pre;transform-origin:0 50%;transform:scaleX(0.9114);">3:06:29</span><div class="a" style="left:1255px;top:973px;width:1px;height:3px;background:#fff"></div><span style="position:absolute;left:1237.2px;top:977.0px;height:15px;line-height:15px;font-size:12px;font-weight:400;color:#fff;white-space:pre;transform-origin:0 50%;transform:scaleX(0.9114);">3:18:26</span><div class="a" style="left:1315px;top:973px;width:1px;height:3px;background:#fff"></div><span style="position:absolute;left:1297.2px;top:977.0px;height:15px;line-height:15px;font-size:12px;font-weight:400;color:#fff;white-space:pre;transform-origin:0 50%;transform:scaleX(0.9114);">3:20:03</span><div class="a" style="left:1375px;top:973px;width:1px;height:3px;background:#fff"></div><span style="position:absolute;left:1357.2px;top:977.0px;height:15px;line-height:15px;font-size:12px;font-weight:400;color:#fff;white-space:pre;transform-origin:0 50%;transform:scaleX(0.9114);">5:27:52</span><div class="a" style="left:1435px;top:973px;width:1px;height:3px;background:#fff"></div><span style="position:absolute;left:1417.2px;top:977.0px;height:15px;line-height:15px;font-size:12px;font-weight:400;color:#fff;white-space:pre;transform-origin:0 50%;transform:scaleX(0.9114);">7:48:35</span><div class="a" style="left:1495px;top:973px;width:1px;height:3px;background:#fff"></div><span style="position:absolute;left:1477.2px;top:977.0px;height:15px;line-height:15px;font-size:12px;font-weight:400;color:#fff;white-space:pre;transform-origin:0 50%;transform:scaleX(0.9322);">8:11:23</span><div class="a" style="left:1555px;top:973px;width:1px;height:3px;background:#fff"></div><span style="position:absolute;left:1537.2px;top:977.0px;height:15px;line-height:15px;font-size:12px;font-weight:400;color:#fff;white-space:pre;transform-origin:0 50%;transform:scaleX(0.9114);">8:46:20</span><div class="a" style="left:1615px;top:973px;width:1px;height:3px;background:#fff"></div><span style="position:absolute;left:1597.2px;top:977.0px;height:15px;line-height:15px;font-size:12px;font-weight:400;color:#fff;white-space:pre;transform-origin:0 50%;transform:scaleX(0.9114);">9:33:43</span><div class="a" style="left:1675px;top:973px;width:1px;height:3px;background:#fff"></div><span style="position:absolute;left:1654.2px;top:977.0px;height:15px;line-height:15px;font-size:12px;font-weight:400;color:#fff;white-space:pre;transform-origin:0 50%;transform:scaleX(0.9097);">10:27:03</span><div class="a" style="left:1735px;top:973px;width:1px;height:3px;background:#fff"></div><span style="position:absolute;left:1714.2px;top:977.0px;height:15px;line-height:15px;font-size:12px;font-weight:400;color:#fff;white-space:pre;transform-origin:0 50%;transform:scaleX(0.9274);">11:01:08</span><div class="a" style="left:1795px;top:973px;width:1px;height:3px;background:#fff"></div><span style="position:absolute;left:117px;top:977.0px;height:15px;line-height:15px;font-size:12px;font-weight:400;color:#fff;white-space:pre;transform-origin:0 50%;transform:scaleX(0.8390);">9:54:2</span><div class="a" style="left:3px;top:976px;width:42px;height:15px;background:#fff"></div><span style="position:absolute;left:4.5px;top:977.0px;height:15px;line-height:15px;font-size:12px;font-weight:400;color:#000;white-space:pre;transform-origin:0 50%;transform:scaleX(0.9668);">7-10-17</span><div class="a" style="left:145px;top:976px;width:139px;height:15px;background:#fff"></div><span style="position:absolute;left:150.5px;top:977.0px;height:15px;line-height:15px;font-size:12px;font-weight:400;color:#000;white-space:pre;transform-origin:0 50%;transform:scaleX(0.9326);">Tue 2017-10-17  10:32:16</span><div class="a" style="left:520px;top:976px;width:31px;height:15px;background:#fff"></div><span style="position:absolute;left:521.5px;top:977.0px;height:15px;line-height:15px;font-size:12px;font-weight:400;color:#000;white-space:pre;transform-origin:0 50%;transform:scaleX(0.9282);">10-18</span><div class="a" style="left:1060px;top:976px;width:31px;height:15px;background:#fff"></div><span style="position:absolute;left:1061.5px;top:977.0px;height:15px;line-height:15px;font-size:12px;font-weight:400;color:#000;white-space:pre;transform-origin:0 50%;transform:scaleX(0.9282);">10-19</span><div class="a" style="left:1780px;top:976px;width:31px;height:15px;background:#fff"></div><span style="position:absolute;left:1781.5px;top:977.0px;height:15px;line-height:15px;font-size:12px;font-weight:400;color:#000;white-space:pre;transform-origin:0 50%;transform:scaleX(0.9282);">10-20</span><div class="a" style="left:1889px;top:976px;width:28px;height:15px;background:#f00"></div><span style="position:absolute;left:1894px;top:977.0px;height:15px;line-height:15px;font-size:12px;font-weight:400;color:#fff;white-space:pre;transform-origin:0 50%;transform:scaleX(0.8101);">19 E</span><div class="cr" style="left:9px;top:459px;height:49px"></div><div class="cr" style="left:29px;top:507px;height:50px"></div><div class="wr" style="left:35px;top:495px;height:12px"></div><div class="cr" style="left:49px;top:556px;height:49px"></div><div class="wr" style="left:55px;top:543px;height:13px"></div><div class="cr" style="left:69px;top:604px;height:49px"></div><div class="wr" style="left:75px;top:574px;height:30px"></div><div class="cr" style="left:89px;top:652px;height:50px"></div><div class="wr" style="left:95px;top:646px;height:6px"></div><div class="cr" style="left:109px;top:701px;height:49px"></div><div class="wr" style="left:115px;top:671px;height:30px"></div><div class="cr" style="left:129px;top:749px;height:50px"></div><div class="wr" style="left:135px;top:743px;height:6px"></div><div class="cg" style="left:149px;top:701px;height:49px"></div><div class="wg" style="left:155px;top:750px;height:66px"></div><div class="cr" style="left:169px;top:749px;height:50px"></div><div class="wr" style="left:175px;top:665px;height:84px"></div><div class="cr" style="left:189px;top:798px;height:49px"></div><div class="wr" style="left:195px;top:774px;height:24px"></div><div class="cr" style="left:209px;top:846px;height:49px"></div><div class="wr" style="left:215px;top:841px;height:5px"></div><div class="cr" style="left:229px;top:894px;height:50px"></div><div class="wr" style="left:235px;top:883px;height:11px"></div><div class="cg" style="left:249px;top:846px;height:49px"></div><div class="wg" style="left:255px;top:895px;height:60px"></div><div class="cg" style="left:269px;top:798px;height:49px"></div><div class="wg" style="left:275px;top:847px;height:11px"></div><div class="cg" style="left:289px;top:749px;height:50px"></div><div class="wg" style="left:295px;top:799px;height:11px"></div><div class="cg" style="left:309px;top:701px;height:49px"></div><div class="wg" style="left:315px;top:750px;height:43px"></div><div class="cg" style="left:329px;top:652px;height:50px"></div><div class="wg" style="left:335px;top:702px;height:17px"></div><div class="cg" style="left:349px;top:604px;height:49px"></div><div class="wg" style="left:355px;top:653px;height:43px"></div><div class="cg" style="left:369px;top:556px;height:49px"></div><div class="wg" style="left:375px;top:605px;height:23px"></div><div class="cg" style="left:389px;top:507px;height:50px"></div><div class="wg" style="left:395px;top:557px;height:35px"></div><div class="cg" style="left:409px;top:368px;height:49px"></div><div class="wg" style="left:415px;top:417px;height:12px"></div><div class="cg" style="left:429px;top:319px;height:50px"></div><div class="wg" style="left:435px;top:369px;height:23px"></div><div class="cg" style="left:449px;top:271px;height:49px"></div><div class="wg" style="left:455px;top:320px;height:5px"></div><div class="cr" style="left:469px;top:319px;height:50px"></div><div class="wr" style="left:475px;top:235px;height:84px"></div><div class="cg" style="left:489px;top:271px;height:49px"></div><div class="wg" style="left:495px;top:320px;height:66px"></div><div class="cg" style="left:509px;top:222px;height:50px"></div><div class="cg" style="left:529px;top:174px;height:49px"></div><div class="cr" style="left:549px;top:222px;height:50px"></div><div class="wr" style="left:555px;top:150px;height:72px"></div><div class="cg" style="left:569px;top:174px;height:49px"></div><div class="cr" style="left:589px;top:222px;height:50px"></div><div class="wr" style="left:595px;top:138px;height:84px"></div><div class="cr" style="left:609px;top:271px;height:49px"></div><div class="wr" style="left:615px;top:265px;height:6px"></div><div class="cg" style="left:629px;top:222px;height:50px"></div><div class="cg" style="left:649px;top:174px;height:49px"></div><div class="cr" style="left:669px;top:222px;height:50px"></div><div class="wr" style="left:675px;top:144px;height:78px"></div><div class="cr" style="left:689px;top:271px;height:49px"></div><div class="wr" style="left:695px;top:210px;height:61px"></div><div class="cr" style="left:989px;top:271px;height:49px"></div><div class="wr" style="left:995px;top:259px;height:12px"></div><div class="cr" style="left:1029px;top:271px;height:49px"></div><div class="wr" style="left:1035px;top:241px;height:30px"></div><div class="cr" style="left:1249px;top:755px;height:50px"></div><div class="cr" style="left:1269px;top:804px;height:49px"></div><div class="wr" style="left:1275px;top:760px;height:44px"></div><div class="cg" style="left:1289px;top:755px;height:50px"></div><div class="cg" style="left:1309px;top:707px;height:49px"></div><div class="wg" style="left:1315px;top:756px;height:79px"></div><div class="cr" style="left:1329px;top:755px;height:50px"></div><div class="wr" style="left:1335px;top:683px;height:72px"></div><div class="cg" style="left:1349px;top:707px;height:49px"></div><div class="wg" style="left:1355px;top:756px;height:61px"></div><div class="cr" style="left:1369px;top:755px;height:50px"></div><div class="wr" style="left:1375px;top:665px;height:90px"></div><div class="cr" style="left:1389px;top:804px;height:49px"></div><div class="cg" style="left:1409px;top:755px;height:50px"></div><div class="wg" style="left:1415px;top:805px;height:60px"></div><div class="cr" style="left:1429px;top:804px;height:49px"></div><div class="wr" style="left:1435px;top:749px;height:55px"></div><div class="cr" style="left:1449px;top:852px;height:50px"></div><div class="wr" style="left:1455px;top:822px;height:30px"></div><div class="cg" style="left:1469px;top:804px;height:49px"></div><div class="wg" style="left:1475px;top:853px;height:61px"></div><div class="cg" style="left:1489px;top:755px;height:50px"></div><div class="wg" style="left:1495px;top:805px;height:42px"></div><div class="cg" style="left:1509px;top:707px;height:49px"></div><div class="wg" style="left:1515px;top:756px;height:13px"></div><div class="cr" style="left:1529px;top:755px;height:50px"></div><div class="wr" style="left:1535px;top:701px;height:54px"></div><div class="cg" style="left:1549px;top:707px;height:49px"></div><div class="wg" style="left:1555px;top:756px;height:67px"></div><div class="cg" style="left:1569px;top:659px;height:49px"></div><div class="wg" style="left:1575px;top:708px;height:73px"></div><div class="cg" style="left:1589px;top:610px;height:50px"></div><div class="wg" style="left:1595px;top:660px;height:18px"></div><div class="cg" style="left:1609px;top:562px;height:49px"></div><div class="wg" style="left:1615px;top:611px;height:24px"></div><div class="cr" style="left:1629px;top:610px;height:50px"></div><div class="wr" style="left:1635px;top:537px;height:73px"></div><div class="cg" style="left:1649px;top:562px;height:49px"></div><div class="wg" style="left:1655px;top:611px;height:67px"></div><div class="cr" style="left:1669px;top:610px;height:50px"></div><div class="wr" style="left:1675px;top:568px;height:42px"></div><div class="cg" style="left:1689px;top:562px;height:49px"></div><div class="cr" style="left:1709px;top:610px;height:50px"></div><div class="wr" style="left:1715px;top:550px;height:60px"></div><div class="cr" style="left:1729px;top:659px;height:49px"></div><div class="wr" style="left:1735px;top:634px;height:25px"></div><div class="cr" style="left:1749px;top:707px;height:49px"></div><div class="wr" style="left:1755px;top:701px;height:6px"></div><div class="cg" style="left:1769px;top:659px;height:49px"></div><div class="wg" style="left:1775px;top:708px;height:85px"></div><div class="cg" style="left:1789px;top:610px;height:50px"></div><div class="wg" style="left:1795px;top:660px;height:30px"></div><div class="a" style="left:510px;top:268px;width:770px;height:505px;background:#f0f0f0;border:1px solid #45bfd8"></div><div class="a" style="left:511px;top:269px;width:768px;height:25px;background:#fff"></div><span style="position:absolute;left:515px;top:273.5px;height:15px;line-height:15px;font-size:12px;font-weight:400;color:#000;white-space:pre;transform-origin:0 50%;transform:scaleX(0.9648);">Chart Settings - GCLZ7 [C]  Renko 8t  #11 - Light Sweet Crude Oil - NYMEX</span><svg class="a" style="left:1256px;top:273px" width="16" height="16" viewBox="0 0 16 16"><path d="M3.300 3.300l9.700 9.700M13 3.300l-9.700 9.700" stroke="#000" stroke-width="1.250" fill="none"/></svg><div class="a" style="left:524px;top:324px;width:743px;height:409px;border:1px solid;border-color:#fff #696969 #696969 #fff;box-shadow:inset -1px -1px 0 #a0a0a0"></div><div class="a" style="left:614px;top:304px;width:110px;height:20px;border:1px solid;border-color:#fff #696969 transparent #fff;border-bottom:0;box-shadow:inset -1px 0 0 #a0a0a0;border-radius:2px 2px 0 0"></div><span style="position:absolute;left:618px;top:309.0px;height:15px;line-height:15px;font-size:12px;font-weight:400;color:#000;white-space:pre;transform-origin:0 50%;transform:scaleX(0.9992);">Advanced Settings</span><div class="a" style="left:725px;top:304px;width:121px;height:20px;border:1px solid;border-color:#fff #696969 transparent #fff;border-bottom:0;box-shadow:inset -1px 0 0 #a0a0a0;border-radius:2px 2px 0 0"></div><span style="position:absolute;left:730px;top:309.0px;height:15px;line-height:15px;font-size:12px;font-weight:400;color:#000;white-space:pre;transform-origin:0 50%;transform:scaleX(0.9993);">Advanced Settings 2</span><div class="a" style="left:847px;top:304px;width:121px;height:20px;border:1px solid;border-color:#fff #696969 transparent #fff;border-bottom:0;box-shadow:inset -1px 0 0 #a0a0a0;border-radius:2px 2px 0 0"></div><span style="position:absolute;left:852px;top:309.0px;height:15px;line-height:15px;font-size:12px;font-weight:400;color:#000;white-space:pre;transform-origin:0 50%;transform:scaleX(0.9993);">Advanced Settings 3</span><div class="a" style="left:969px;top:304px;width:41px;height:20px;border:1px solid;border-color:#fff #696969 transparent #fff;border-bottom:0;box-shadow:inset -1px 0 0 #a0a0a0;border-radius:2px 2px 0 0"></div><span style="position:absolute;left:974px;top:309.0px;height:15px;line-height:15px;font-size:12px;font-weight:400;color:#000;white-space:pre;transform-origin:0 50%;transform:scaleX(0.9776);">Alerts</span><div class="a" style="left:524px;top:302px;width:90px;height:23px;background:#f0f0f0;border:1px solid;border-color:#fff #696969 transparent #fff;border-bottom:0;box-shadow:inset -1px 0 0 #a0a0a0;border-radius:2px 2px 0 0"></div><span style="position:absolute;left:531.5px;top:307.0px;height:15px;line-height:15px;font-size:12px;font-weight:400;color:#000;white-space:pre;transform-origin:0 50%;transform:scaleX(1.0247);">Main Settings</span><div class="lb " style="left:537px;top:330px;">Date Range In File (yyyy-mm-dd):</div><div class="lb " style="left:544px;top:351px;">From:</div><div class="ed" style="left:581px;top:347px;width:81px;height:23px;"><span style="">2017-10-01</span></div><div class="lb " style="left:682px;top:351px;">To:</div><div class="ed ro" style="left:704px;top:347px;width:82px;height:23px;"><span style="">2017-10-20</span></div><div class="gb" style="left:537px;top:372px;width:269px;height:71px"></div><div class="rd" style="left:542px;top:378px"><i></i></div><div class="lb " style="left:559px;top:377.5px;letter-spacing:.12px">Use Number Of Days To Load</div><div class="lb " style="left:547px;top:400.5px;"><u>D</u>ays To Load:</div><div class="ed" style="left:628px;top:395px;width:87px;height:22px;"><span style="">90</span></div><div class="btn" style="left:698px;top:396px;width:16px;height:10px"></div><div class="btn" style="left:698px;top:406px;width:16px;height:10px"></div><svg class="a" style="left:698px;top:396px" width="16" height="20" viewBox="0 0 16 20"><path d="M5.500 6.500h4l-2-2zM5.500 13.500h4l-2 2z" fill="#000"/></svg><div class="a" style="left:631px;top:398px;width:1px;height:15px;background:#000"></div><div class="lb " style="left:761px;top:385.5px;">Market</div><div class="lb " style="left:761px;top:400.5px;">Depth:</div><div class="cb" style="left:541px;top:423px"><svg width="9" height="9" viewBox="0 0 9 9"><path d="M1 3.500L3.500 6 8 1.500" stroke="#000" stroke-width="1.800" fill="none"/></svg></div><div class="lb " style="left:559px;top:423.5px;">Adjust Proportional With Bar Period</div><div class="ed" style="left:761px;top:418px;width:42px;height:23px;"><span style="">10</span></div><div class="gb" style="left:537px;top:447px;width:269px;height:54px"></div><div class="rd" style="left:542px;top:451px"></div><div class="lb " style="left:559px;top:450.5px;">Use Date Range</div><div class="lb dis" style="left:562px;top:469px;">From:</div><div class="ed ro" style="left:597px;top:467px;width:81px;height:23px;"><span style="color:#a0a0a0;">2017-03-24</span></div><div class="lb dis" style="left:686px;top:469px;">To:</div><div class="ed ro" style="left:705px;top:467px;width:81px;height:23px;"><span style="color:#a0a0a0;">2017-03-24</span></div><div class="gb" style="left:537px;top:504px;width:269px;height:84px"></div><div class="lb " style="left:562px;top:515.5px;">P<u>r</u>ice Display Format:</div><div class="ed" style="left:681px;top:512px;width:104px;height:23px;"><span style="left:3.5px;top:4px;">.01</span><div class="dd"><i></i></div></div><div class="lb " style="left:626px;top:541.5px;">Tick Size:</div><div class="ed" style="left:681px;top:538px;width:104px;height:23px;"><span style="">0.010000</span></div><div class="cb" style="left:560px;top:565px"></div><div class="lb " style="left:578px;top:564.5px;">Auto-Set From Data Feed</div><div class="lb " style="left:559px;top:597.5px;">Volume at Price Mult.:</div><div class="ed" style="left:681px;top:594px;width:104px;height:23px;"><span style="left:3.5px;top:4px;">1</span><div class="dd"><i></i></div></div><div class="lb " style="left:537px;top:614.5px;">Symbol:</div><div class="ed" style="left:560px;top:632px;width:175px;height:23px;"><span style="">GCLZ7</span></div><div class="btn" style="left:747px;top:632px;width:53px;height:23px;line-height:23px">Find</div><div class="lb " style="left:537px;top:661.5px;"><u>T</u>rade and Current Quote Symbol:</div><div class="ed" style="left:560px;top:679px;width:175px;height:23px;"></div><div class="btn" style="left:747px;top:679px;width:53px;height:23px;line-height:23px">Find</div><div class="lb " style="left:814px;top:330px;">Chart Data Type:</div><div class="ed" style="left:814px;top:347px;width:241px;height:23px;"><span style="left:3.5px;top:4px;">Intraday Chart</span><div class="dd"><i></i></div></div><div class="gb" style="left:814px;top:380px;width:241px;height:108px"></div><div class="lb bg" style="left:821px;top:375px">Intraday Chart Bar Period:</div><div class="lb " style="left:824px;top:391.5px;">Bar Period Type:</div><div class="ed" style="left:821px;top:407px;width:230px;height:23px;"><span style="left:3.5px;top:4px;">Renko Bar (in ticks)</span><div class="dd"><i></i></div></div><div class="ed" style="left:821px;top:437px;width:110px;height:23px;"><span style="">8</span></div><div class="ed" style="left:936px;top:437px;width:115px;height:23px;"><span style="left:3.5px;top:4px;">None</span><div class="dd"><i></i></div></div><div class="gb" style="left:814px;top:496px;width:241px;height:187px"></div><div class="lb bg" style="left:821px;top:491px">Session Times (HH:MM:SS):</div><div class="lb " style="left:828px;top:511.5px;"><u>S</u>tart Time:</div><div class="ed" style="left:936px;top:510px;width:105px;height:23px;"><span style="">08:00:00</span></div><div class="lb " style="left:828px;top:537.5px;"><u>E</u>nd Time:</div><div class="ed" style="left:936px;top:534px;width:105px;height:23px;"><span style="">13:30:00</span></div><div class="cb" style="left:828px;top:561px"><svg width="9" height="9" viewBox="0 0 9 9"><path d="M1 3.500L3.500 6 8 1.500" stroke="#000" stroke-width="1.800" fill="none"/></svg></div><div class="lb " style="left:846px;top:561.5px;">Use Evening Session</div><div class="lb " style="left:828px;top:584.5px;">Evening Start:</div><div class="ed" style="left:936px;top:579px;width:105px;height:23px;"><span style="">13:30:00</span></div><div class="lb " style="left:828px;top:610.5px;">Evening End:</div><div class="ed" style="left:936px;top:605px;width:105px;height:23px;"><span style="">08:00:00</span></div><div class="cb" style="left:828px;top:635px"></div><div class="lb " style="left:846px;top:635.5px;">New Bar At Session Start</div><div class="ed" style="left:828px;top:653px;width:213px;height:22px;"><span style="left:3.5px;top:3px;">Load All Weekend Data</span><div class="dd"><i></i></div></div><div class="cb" style="left:828px;top:689px"></div><div class="lb " style="left:846px;top:688.5px;">Automatically Rollover Futures Symbol</div><div class="cb" style="left:828px;top:708px"></div><div class="lb " style="left:846px;top:708px;">Save Days to Load, Intraday Bar Period, Graph Draw Type as Default</div><div class="gb" style="left:1064px;top:339px;width:192px;height:116px"></div><div class="lb bg" style="left:1071px;top:334px">Historical Chart Bar Period:</div><div class="rd dis" style="left:1083px;top:355px"><i></i></div><div class="lb dis" style="left:1100px;top:355px;">Days:</div><div class="rd dis" style="left:1083px;top:374px"></div><div class="lb dis" style="left:1100px;top:374px;">Weekly</div><div class="rd dis" style="left:1083px;top:393px"></div><div class="lb dis" style="left:1100px;top:393px;">Monthly</div><div class="rd dis" style="left:1083px;top:412px"></div><div class="lb dis" style="left:1100px;top:412px;">Quarterly</div><div class="rd dis" style="left:1083px;top:430px"></div><div class="lb dis" style="left:1100px;top:431px;">Yearly</div><div class="ed ro" style="left:1155px;top:352px;width:84px;height:22px;"><span style="color:#a0a0a0;">1</span></div><div class="lb " style="left:1064px;top:467px;"><u>G</u>raph Draw Type:</div><div class="ed" style="left:1064px;top:484px;width:192px;height:95px"></div><div class="a" style="left:1066px;top:486px;width:172px;height:91px;overflow:hidden"><div class="a" style="left:2px;top:2px;white-space:nowrap;font-size:12px;line-height:15px;word-spacing:.7px;">Price Volume Bars</div><div class="a" style="left:2px;top:17px;white-space:nowrap;font-size:12px;line-height:15px;word-spacing:.7px;">Candle Price Volume Bars</div><div class="a" style="left:2px;top:32px;white-space:nowrap;font-size:12px;line-height:15px;word-spacing:.7px;">Candle Price Volume Bars Hollow</div><div class="a" style="left:2px;top:47px;white-space:nowrap;font-size:12px;line-height:15px;word-spacing:.7px;">Point and Figure XO</div><div class="a" style="left:2px;top:62px;white-space:nowrap;font-size:12px;line-height:15px;word-spacing:.7px;">Renko Bricks</div><div class="a" style="left:0;top:75px;width:172px;height:15px;background:#0078d7"></div><div class="a" style="left:2px;top:77px;white-space:nowrap;font-size:12px;line-height:15px;word-spacing:.7px;color:#fff;">Renko Bricks with Wicks</div></div><div class="a" style="left:1238px;top:486px;width:16px;height:91px;background:#f0f0f0"></div><div class="a" style="left:1239px;top:540px;width:15px;height:18px;background:#cdcdcd"></div><svg class="a" style="left:1238px;top:486px" width="16" height="91" viewBox="0 0 16 91"><g fill="none" stroke="#404040" stroke-width="1.500"><path d="M4.500 11l3.500-3.500L11.500 11"/><path d="M4.500 81l3.500 3.500L11.500 81"/></g></svg><div class="btn" style="left:1064px;top:587px;width:81px;height:26px;line-height:26px">S<u>c</u>ale</div><div class="btn" style="left:1066px;top:624px;width:182px;height:26px;line-height:26px">Apply Global Symbol Settings</div><div class="btn" style="left:1066px;top:656px;width:182px;height:26px;line-height:26px">Edit Global Symbol Settings</div><div class="a" style="left:523px;top:736px;width:86px;height:26px;background:#696969"></div><div class="btn" style="left:524px;top:737px;width:84px;height:24px;line-height:24px">OK</div><div class="btn" style="left:616px;top:736px;width:86px;height:26px;line-height:26px">Cancel</div><div class="btn" style="left:709px;top:736px;width:86px;height:26px;line-height:26px">Apply</div><div class="btn" style="left:802px;top:736px;width:86px;height:26px;line-height:26px">Help</div>
</body></html>
